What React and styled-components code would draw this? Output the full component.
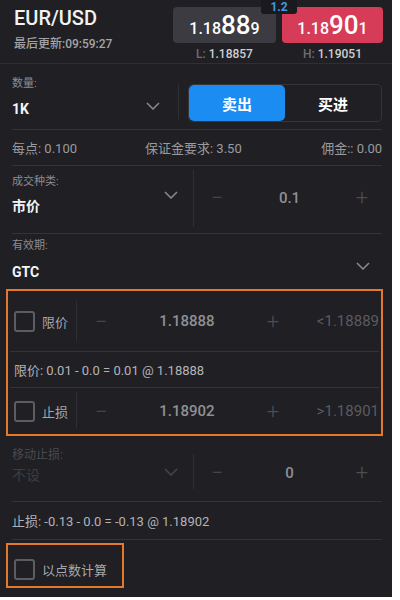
import React from "react";
import styled, { createGlobalStyle } from "styled-components";

const Global = createGlobalStyle`
  html, body { margin: 0; padding: 0; background: #ffffff; }
  body { font-family: Roboto, "Noto Sans CJK SC", sans-serif; }
  * { box-sizing: border-box; }
`;

const Screen = styled.div`
  width: 392px;
  height: 597px;
  background: #1f1f24;
  color: #fff;
  overflow: hidden;
  font-family: Roboto, "Noto Sans CJK SC", sans-serif;
`;

const Header = styled.div`
  height: 64px;
  display: flex;
  justify-content: space-between;
  padding: 0 9px 0 14px;
  border-bottom: 1px solid #2e2e33;
`;

const Symbol = styled.div`
  padding-top: 6px;
`;

const Title = styled.div`
  font-size: 20px;
  line-height: 24px;
  font-weight: 500;
  color: #f2f2f2;
`;

const Updated = styled.div`
  margin-top: 7px;
  font-size: 12px;
  line-height: 14px;
  font-weight: 500;
  color: #a4a4a7;
`;

const Quotes = styled.div`
  position: relative;
  padding-top: 7px;
  display: grid;
  grid-template-columns: 103px 101px;
  column-gap: 6px;
`;

const PriceBox = styled.div`
  height: 36px;
  border-radius: 4px;
  background: ${(p) => (p.$ask ? "#d63c58" : "#3b3b41")};
  display: flex;
  align-items: baseline;
  justify-content: center;
  padding-top: 5px;
  color: #fff;
`;

const Small = styled.span`
  font-size: 16px;
  font-weight: 500;
`;

const Big = styled.span`
  font-size: 26px;
  line-height: 26px;
  font-weight: 500;
`;

const Range = styled.div`
  text-align: center;
  font-size: 12px;
  line-height: 14px;
  margin-top: 4px;
  font-weight: 500;
  color: #cfcfd2;
  span { color: #6e6e72; }
`;

const Spread = styled.div`
  position: absolute;
  top: 0;
  left: 88px;
  width: 36px;
  height: 14px;
  background: #1a1a1e;
  color: #3b9be3;
  font-size: 12px;
  font-weight: 700;
  line-height: 14px;
  text-align: center;
  border-radius: 0 0 3px 3px;
`;

const Row = styled.div`
  height: ${(p) => p.$h}px;
  margin: 0 10px 0 12px;
  display: flex;
  align-items: ${(p) => p.$align || "stretch"};
  border-bottom: ${(p) => (p.$noLine ? "none" : "1px solid #333338")};
`;

const Field = styled.div`
  width: ${(p) => p.$w}px;
  flex: ${(p) => (p.$w ? "none" : "1")};
  position: relative;
  display: flex;
  flex-direction: column;
  padding-top: ${(p) => p.$pt}px;
  opacity: ${(p) => (p.$dim ? 0.35 : 1)};
`;

const Label = styled.div`
  font-size: 11px;
  line-height: 14px;
  color: #8c8c90;
`;

const Value = styled.div`
  margin-top: ${(p) => p.$mt || 10}px;
  font-size: 14px;
  line-height: 18px;
  font-weight: 700;
  color: #f4f4f4;
`;

const Chevron = styled.svg`
  position: absolute;
  right: ${(p) => p.$r}px;
  top: ${(p) => p.$t}px;
  width: 14px;
  height: 8px;
`;

const VLine = styled.div`
  width: 1px;
  align-self: stretch;
  margin: ${(p) => p.$m || "4px 0"};
  background: #2f2f34;
`;

const Segmented = styled.div`
  margin-left: auto;
  margin-top: 20px;
  width: 194px;
  height: 38px;
  display: flex;
  border: 1px solid #35353b;
  border-radius: 5px;
  overflow: hidden;
`;

const Seg = styled.div`
  flex: 1;
  display: flex;
  align-items: center;
  justify-content: center;
  font-size: 15px;
  font-weight: 700;
  color: #fff;
  background: ${(p) => (p.$active ? "#1b8cf2" : "transparent")};
  border-radius: ${(p) => (p.$active ? "5px" : "0")};
`;

const InfoText = styled.div`
  font-size: 13px;
  color: #9b9b9e;
`;

const Stepper = styled.div`
  flex: 1;
  display: flex;
  align-items: center;
  padding: ${(p) => p.$pad || "0 8px 0 12px"};
  color: #8f8f92;
`;

const StepSign = styled.span`
  font-size: 22px;
  font-weight: 300;
  color: #4d4d52;
  width: 20px;
  text-align: center;
`;

const StepValue = styled.span`
  flex: 1;
  text-align: center;
  font-size: ${(p) => p.$fs || 15}px;
  color: #909093;
  font-weight: 500;
`;

const Limit = styled.span`
  font-size: 15px;
  color: #5b5b60;
  margin-left: 22px;
  width: 74px;
  text-align: right;
`;

const OrangeBox = styled.div`
  margin: ${(p) => p.$m};
  width: ${(p) => (p.$w ? p.$w + "px" : "auto")};
  border: 2px solid #e4782c;
  padding: ${(p) => p.$p || "0"};
`;

const InnerRow = styled.div`
  height: ${(p) => p.$h}px;
  display: flex;
  align-items: center;
  padding-top: ${(p) => p.$pt || 0}px;
  border-bottom: ${(p) => (p.$line ? "1px solid #333338" : "none")};
  margin-right: 2px;
`;

const Check = styled.span`
  width: 21px;
  height: 21px;
  border: 2px solid #5c5c61;
  border-radius: 3px;
  flex: none;
  margin-left: 4px;
`;

const CheckLabel = styled.span`
  font-size: 13px;
  color: #a8a8ab;
  margin-left: 7px;
  width: ${(p) => (p.$w ? p.$w + "px" : "auto")};
`;

const Formula = styled.div`
  font-size: 13px;
  color: #b4b4b7;
  padding-left: ${(p) => p.$pl || 0}px;
`;

const ChevronIcon = ({ r, t }) => (
  <Chevron $r={r} $t={t} viewBox="0 0 14 8">
    <path d="M1 1 L7 7 L13 1" fill="none" stroke="#8a8a8e" strokeWidth="1.5" />
  </Chevron>
);

export default function App() {
  return (
    <>
      <Global />
      <Screen>
        <Header>
          <Symbol>
            <Title>EUR/USD</Title>
            <Updated>最后更新:09:59:27</Updated>
          </Symbol>
          <Quotes>
            <div>
              <PriceBox>
                <Small>1.18</Small>
                <Big>88</Big>
                <Small>9</Small>
              </PriceBox>
              <Range>
                <span>L:</span> 1.18857
              </Range>
            </div>
            <div>
              <PriceBox $ask>
                <Small>1.18</Small>
                <Big>90</Big>
                <Small>1</Small>
              </PriceBox>
              <Range>
                <span>H:</span> 1.19051
              </Range>
            </div>
            <Spread>1.2</Spread>
          </Quotes>
        </Header>

        <Row $h={66}>
          <Field $w={166} $pt={13}>
            <Label>数量:</Label>
            <Value $mt={9}>1K</Value>
            <ChevronIcon r={18} t={38} />
          </Field>
          <VLine $m="20px 0 10px" />
          <Segmented>
            <Seg $active>卖出</Seg>
            <Seg>买进</Seg>
          </Segmented>
        </Row>

        <Row $h={36} $align="center">
          <InfoText style={{ width: 133 }}>每点: 0.100</InfoText>
          <InfoText>保证金要求: 3.50</InfoText>
          <InfoText style={{ marginLeft: "auto" }}>佣金:: 0.00</InfoText>
        </Row>

        <Row $h={68}>
          <Field $w={181} $pt={9}>
            <Label>成交种类:</Label>
            <Value $mt={8}>市价</Value>
            <ChevronIcon r={15} t={25} />
          </Field>
          <VLine $m="4px 0 6px" />
          <Stepper $pad="0 10px 4px 13px">
            <StepSign>−</StepSign>
            <StepValue>0.1</StepValue>
            <StepSign>+</StepSign>
          </Stepper>
        </Row>

        <Row $h={55} $noLine>
          <Field $pt={5}>
            <Label>有效期:</Label>
            <Value $mt={10}>GTC</Value>
            <ChevronIcon r={12} t={28} />
          </Field>
        </Row>

        <OrangeBox $m="0 9px 0 6px" $p="0 0 0 2px">
          <InnerRow $h={61} $line>
            <Check />
            <CheckLabel $w={34}>限价</CheckLabel>
            <VLine $m="10px 0" />
            <Stepper $pad="0 0 0 14px">
              <StepSign>−</StepSign>
              <StepValue>1.18888</StepValue>
              <StepSign>+</StepSign>
              <Limit>&lt;1.18889</Limit>
            </Stepper>
          </InnerRow>
          <InnerRow $h={36} $line>
            <Formula $pl={4}>限价: 0.01 - 0.0 = 0.01 @ 1.18888</Formula>
          </InnerRow>
          <InnerRow $h={46}>
            <Check />
            <CheckLabel $w={34}>止损</CheckLabel>
            <VLine $m="4px 0 6px" />
            <Stepper $pad="0 0 0 14px">
              <StepSign>−</StepSign>
              <StepValue>1.18902</StepValue>
              <StepSign>+</StepSign>
              <Limit>&gt;1.18901</Limit>
            </Stepper>
          </InnerRow>
        </OrangeBox>

        <Row $h={66}>
          <Field $w={181} $pt={12} $dim>
            <Label style={{ color: "#9a9a9e", fontSize: 12 }}>移动止损:</Label>
            <Value $mt={4} style={{ fontWeight: 400, color: "#777" }}>不设</Value>
            <ChevronIcon r={15} t={32} />
          </Field>
          <VLine $m="18px 0 12px" />
          <Stepper $pad="8px 10px 0 13px">
            <StepSign>−</StepSign>
            <StepValue>0</StepValue>
            <StepSign>+</StepSign>
          </Stepper>
        </Row>

        <Row $h={38} $align="center">
          <Formula>止损: -0.13 - 0.0 = -0.13 @ 1.18902</Formula>
        </Row>

        <OrangeBox $m="3px 0 0 6px" $w={118} $p="0 0 0 2px">
          <InnerRow $h={41} $pt={8}>
            <Check />
            <CheckLabel>以点数计算</CheckLabel>
          </InnerRow>
        </OrangeBox>
      </Screen>
    </>
  );
}
